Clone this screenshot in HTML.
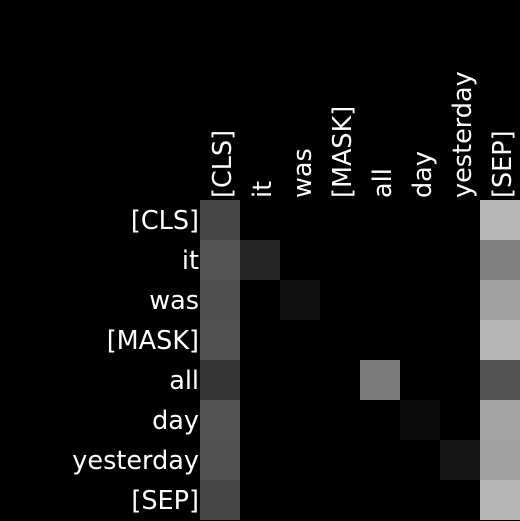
<!DOCTYPE html>
<html><head><style>
body{margin:0;background:#000;width:520px;height:520px;overflow:hidden;position:relative;font-family:"DejaVu Sans",sans-serif;color:#fff;font-size:25.5px}
.c{position:absolute;width:40px;height:40px}
.r{position:absolute;right:321px;height:40px;line-height:40px;white-space:nowrap}
.col{position:absolute;top:198px;height:40px;line-height:40px;white-space:nowrap;transform-origin:0 0;transform:rotate(-90deg)}
</style></head><body>
<div class="r" style="top:201px">[CLS]</div>
<div class="r" style="top:241px">it</div>
<div class="r" style="top:281px">was</div>
<div class="r" style="top:321px">[MASK]</div>
<div class="r" style="top:361px">all</div>
<div class="r" style="top:401px">day</div>
<div class="r" style="top:441px">yesterday</div>
<div class="r" style="top:481px">[SEP]</div>

<div class="col" style="left:203px">[CLS]</div>
<div class="col" style="left:243px">it</div>
<div class="col" style="left:283px">was</div>
<div class="col" style="left:323px">[MASK]</div>
<div class="col" style="left:363px">all</div>
<div class="col" style="left:403px">day</div>
<div class="col" style="left:443px">yesterday</div>
<div class="col" style="left:483px">[SEP]</div>

<div class="c" style="left:200px;top:200px;background:#444"></div>
<div class="c" style="left:200px;top:240px;background:#545454"></div>
<div class="c" style="left:200px;top:280px;background:#4f4f4f"></div>
<div class="c" style="left:200px;top:320px;background:#505050"></div>
<div class="c" style="left:200px;top:360px;background:#353535"></div>
<div class="c" style="left:200px;top:400px;background:#525252"></div>
<div class="c" style="left:200px;top:440px;background:#515151"></div>
<div class="c" style="left:200px;top:480px;background:#444"></div>
<div class="c" style="left:240px;top:240px;background:#262626"></div>
<div class="c" style="left:280px;top:280px;background:#111"></div>
<div class="c" style="left:360px;top:360px;background:#7a7a7a"></div>
<div class="c" style="left:400px;top:400px;background:#0b0b0b"></div>
<div class="c" style="left:440px;top:440px;background:#131313"></div>
<div class="c" style="left:480px;top:200px;background:#b8b8b8"></div>
<div class="c" style="left:480px;top:240px;background:#808080"></div>
<div class="c" style="left:480px;top:280px;background:#a2a2a2"></div>
<div class="c" style="left:480px;top:320px;background:#b4b4b4"></div>
<div class="c" style="left:480px;top:360px;background:#525252"></div>
<div class="c" style="left:480px;top:400px;background:#a3a3a3"></div>
<div class="c" style="left:480px;top:440px;background:#a0a0a0"></div>
<div class="c" style="left:480px;top:480px;background:#b4b4b4"></div>
</body></html>
